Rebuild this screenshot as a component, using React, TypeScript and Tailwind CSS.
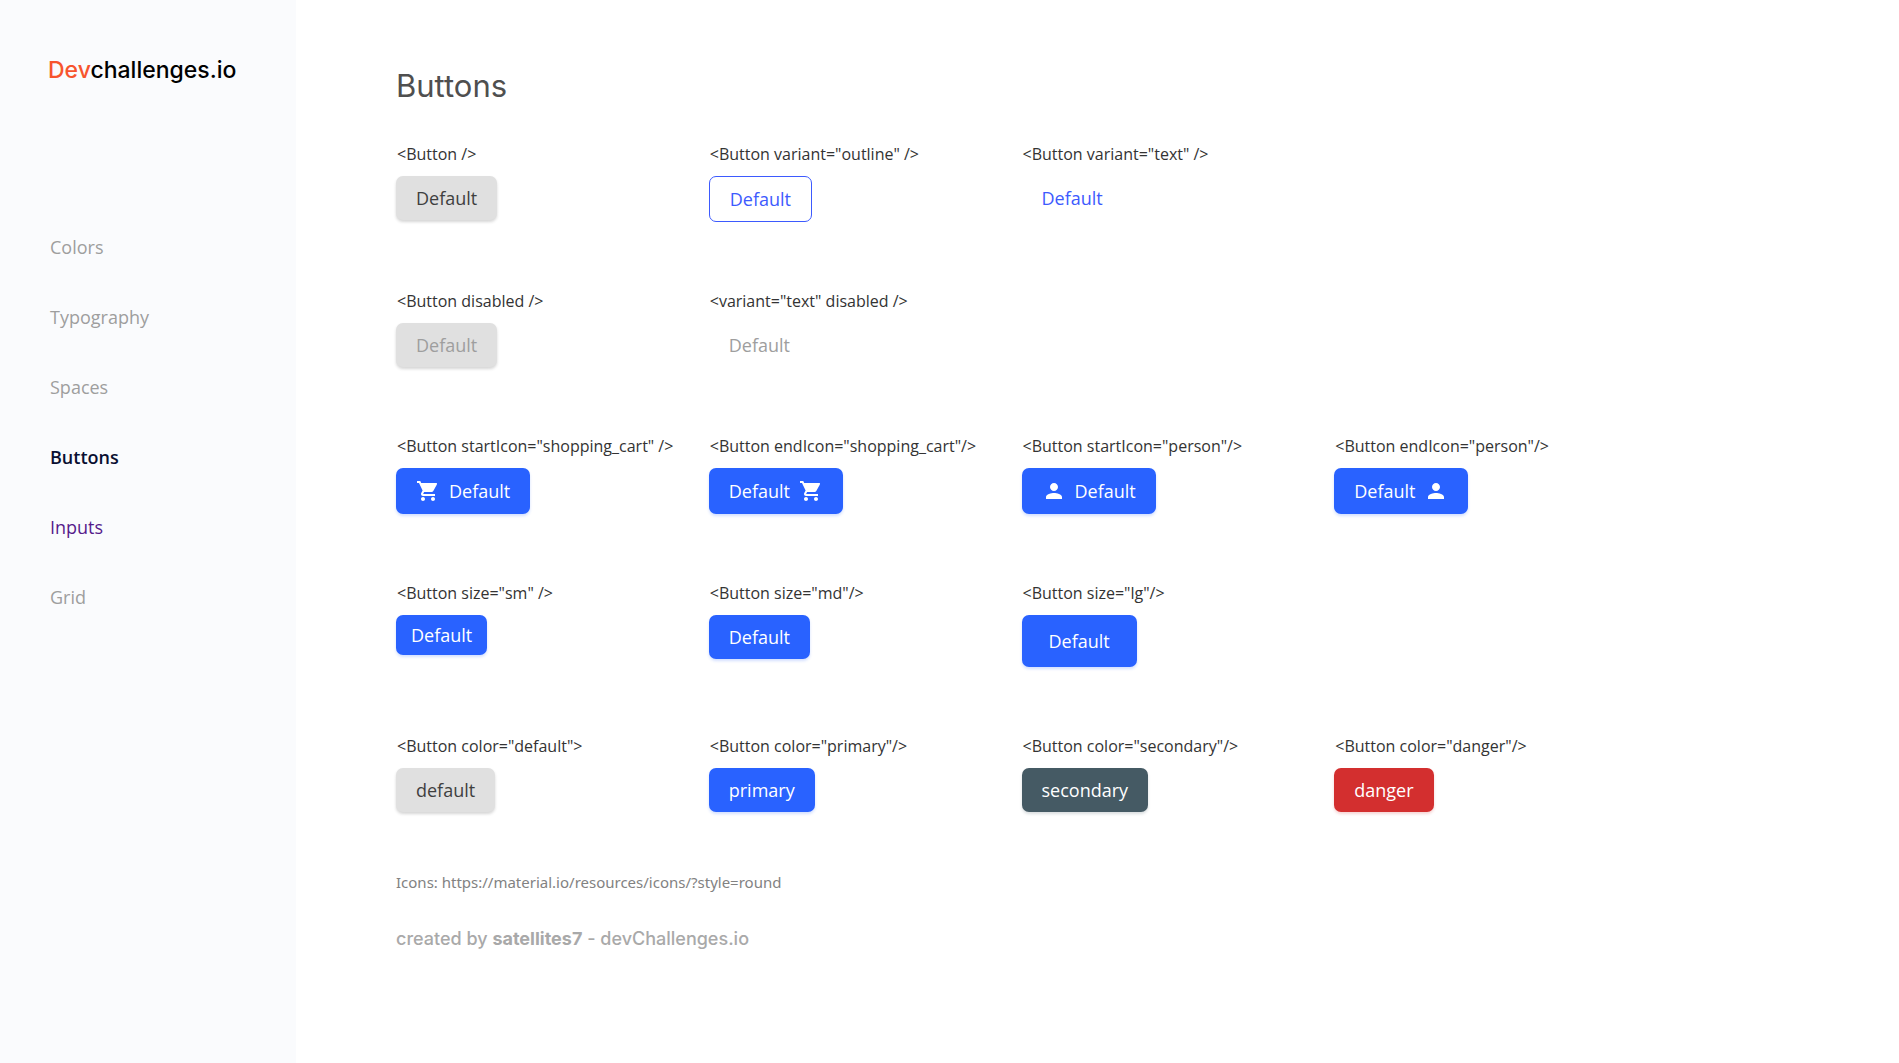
import type { ReactNode } from "react";

type Variant = "solid" | "outline" | "text";
type Color = "default" | "primary" | "secondary" | "danger";
type Size = "sm" | "md" | "lg";
type IconName = "shopping_cart" | "person";

const ICON_PATHS: Record<IconName, string> = {
  shopping_cart:
    "M7 18c-1.1 0-1.99.9-1.99 2S5.9 22 7 22s2-.9 2-2-.9-2-2-2zM1 2v2h2l3.6 7.59-1.35 2.45c-.16.28-.25.61-.25.96 0 1.1.9 2 2 2h12v-2H7.42c-.14 0-.25-.11-.25-.25l.03-.12.9-1.63h7.45c.75 0 1.41-.41 1.75-1.03l3.58-6.49A1 1 0 0 0 20 4H5.21l-.94-2H1zm16 16c-1.1 0-1.99.9-1.99 2s.89 2 1.99 2 2-.9 2-2-.9-2-2-2z",
  person:
    "M12 12c2.21 0 4-1.79 4-4s-1.79-4-4-4-4 1.79-4 4 1.79 4 4 4zm0 2c-2.67 0-8 1.34-8 4v2h16v-2c0-2.66-5.33-4-8-4z",
};

const COLORS: Record<Color, string> = {
  default: "bg-[#e0e0e0] text-[#3f3f3f] shadow-[0_2px_3px_rgba(51,51,51,0.2)]",
  primary: "bg-[#2962ff] text-white shadow-[0_2px_3px_rgba(41,98,255,0.2)]",
  secondary: "bg-[#455a64] text-white shadow-[0_2px_3px_rgba(69,90,100,0.2)]",
  danger: "bg-[#d32f2f] text-white shadow-[0_2px_3px_rgba(211,47,47,0.2)]",
};

const SIZES: Record<Size, string> = {
  sm: "px-[15px] py-2",
  md: "px-5 py-[10px]",
  lg: "px-[27px] py-[14px]",
};

function Icon({ name }: { name: IconName }) {
  return (
    <svg viewBox="0 0 24 24" className="my-px size-6 fill-current" aria-hidden="true">
      <path d={ICON_PATHS[name]} />
    </svg>
  );
}

interface ButtonProps {
  children: ReactNode;
  variant?: Variant;
  color?: Color;
  size?: Size;
  disabled?: boolean;
  startIcon?: IconName;
  endIcon?: IconName;
}

function Button({ children, variant = "solid", color = "default", size = "md", disabled, startIcon, endIcon }: ButtonProps) {
  const look =
    variant === "outline"
      ? "border border-[#3d5afe] text-[#3d5afe]"
      : variant === "text"
        ? "text-[#3d5afe]"
        : COLORS[color];
  return (
    <button
      type="button"
      disabled={disabled}
      className={`inline-flex items-center gap-[9px] rounded-[7px] text-lg leading-6 disabled:text-[#9e9e9e] ${SIZES[size]} ${look}`}
    >
      {startIcon && <Icon name={startIcon} />}
      {children}
      {endIcon && <Icon name={endIcon} />}
    </button>
  );
}

function Sample({ code, children }: { code: string; children: ReactNode }) {
  return (
    <div className="flex flex-col items-start gap-[10px]">
      <code className="ml-px font-['Open_Sans',sans-serif] text-base leading-6 whitespace-nowrap text-[#333]">{code}</code>
      {children}
    </div>
  );
}

function Row({ children }: { children: ReactNode }) {
  return <div className="grid grid-cols-4">{children}</div>;
}

const NAV = [
  { label: "Colors", look: "text-[#9e9e9e]" },
  { label: "Typography", look: "text-[#9e9e9e]" },
  { label: "Spaces", look: "text-[#9e9e9e]" },
  { label: "Buttons", look: "font-semibold text-[#090f31]" },
  { label: "Inputs", look: "text-[#551a8b]" },
  { label: "Grid", look: "text-[#9e9e9e]" },
];

export default function App() {
  return (
    <div className="flex min-h-screen bg-white font-['Open_Sans',sans-serif]">
      <aside className="w-[296px] shrink-0 bg-[#fafbfd] px-12 pt-[54px]">
        <a href="#home" className="block font-['Inter',sans-serif] text-[23px] leading-8 font-medium text-black">
          <span className="text-[#f7542e]">Dev</span>challenges.io
        </a>
        <nav className="mt-[149px] ml-0.5 flex flex-col items-start gap-[46px] text-lg leading-6">
          {NAV.map(({ label, look }) => (
            <a key={label} href={`#${label.toLowerCase()}`} className={look}>
              {label}
            </a>
          ))}
        </nav>
      </aside>

      <main className="min-w-0 flex-1 px-[100px] pt-[66px] pb-16">
        <h1 className="font-['Inter',sans-serif] text-[31px] leading-10 text-[#4f4f4f]">Buttons</h1>

        <div className="mt-9 flex max-w-[1251px] flex-col gap-[67px]">
          <Row>
            <Sample code="<Button />">
              <Button>Default</Button>
            </Sample>
            <Sample code={'<Button variant="outline" />'}>
              <Button variant="outline">Default</Button>
            </Sample>
            <Sample code={'<Button variant="text" />'}>
              <Button variant="text">Default</Button>
            </Sample>
          </Row>
          <Row>
            <Sample code="<Button disabled />">
              <Button disabled>Default</Button>
            </Sample>
            <Sample code={'<variant="text" disabled />'}>
              <Button variant="text" disabled>Default</Button>
            </Sample>
          </Row>
          <Row>
            <Sample code={'<Button startIcon="shopping_cart" />'}>
              <Button color="primary" startIcon="shopping_cart">Default</Button>
            </Sample>
            <Sample code={'<Button endIcon="shopping_cart"/>'}>
              <Button color="primary" endIcon="shopping_cart">Default</Button>
            </Sample>
            <Sample code={'<Button startIcon="person"/>'}>
              <Button color="primary" startIcon="person">Default</Button>
            </Sample>
            <Sample code={'<Button endIcon="person"/>'}>
              <Button color="primary" endIcon="person">Default</Button>
            </Sample>
          </Row>
          <Row>
            <Sample code={'<Button size="sm" />'}>
              <Button color="primary" size="sm">Default</Button>
            </Sample>
            <Sample code={'<Button size="md"/>'}>
              <Button color="primary" size="md">Default</Button>
            </Sample>
            <Sample code={'<Button size="lg"/>'}>
              <Button color="primary" size="lg">Default</Button>
            </Sample>
          </Row>
          <Row>
            <Sample code={'<Button color="default">'}>
              <Button>default</Button>
            </Sample>
            <Sample code={'<Button color="primary"/>'}>
              <Button color="primary">primary</Button>
            </Sample>
            <Sample code={'<Button color="secondary"/>'}>
              <Button color="secondary">secondary</Button>
            </Sample>
            <Sample code={'<Button color="danger"/>'}>
              <Button color="danger">danger</Button>
            </Sample>
          </Row>
        </div>

        <footer>
          <p className="mt-[58px] font-['Noto_Sans',sans-serif] text-[15px] leading-6 text-[#828282]">
            Icons: https://material.io/resources/icons/?style=round
          </p>
          <p className="mt-[33px] font-['Inter',sans-serif] text-lg leading-6 font-medium text-[#a9a9a9]">
            created by <strong className="font-bold">satellites7</strong> - devChallenges.io
          </p>
        </footer>
      </main>
    </div>
  );
}
